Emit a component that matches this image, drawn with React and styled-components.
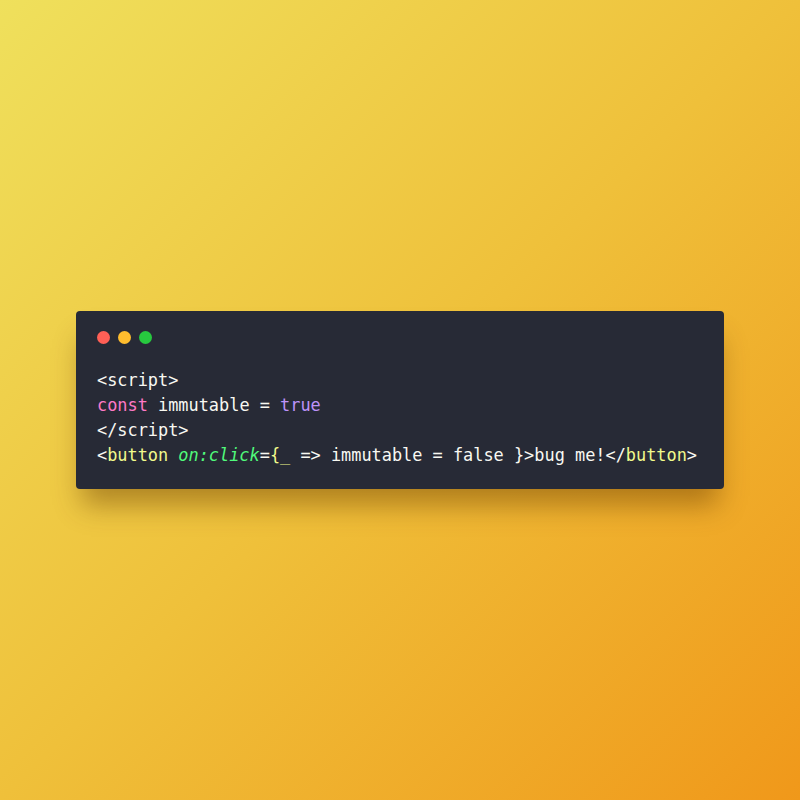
import styled, { createGlobalStyle } from "styled-components";

const Global = createGlobalStyle`
  html, body {
    margin: 0;
    padding: 0;
  }
`;

const Backdrop = styled.div`
  width: 800px;
  height: 800px;
  display: flex;
  align-items: center;
  justify-content: center;
  background: linear-gradient(135deg, #efe05c 0%, #efc03a 50%, #f0981a 100%);
`;

const Window = styled.div`
  box-sizing: border-box;
  width: 648px;
  padding: 20px 21px 21px 21px;
  background: #272a36;
  border-radius: 4px;
  box-shadow: 0 22px 26px -6px rgba(100, 55, 0, 0.45);
`;

const Controls = styled.div`
  display: flex;
  gap: 8px;
  margin-bottom: 24px;
`;

const Dot = styled.span`
  width: 13px;
  height: 13px;
  border-radius: 50%;
  background: ${(p) => p.color};
`;

const Code = styled.pre`
  margin: 0;
  font-family: "DejaVu Sans Mono", monospace;
  font-size: 16.9px;
  line-height: 25px;
  color: #f8f8f2;
`;

const Tok = styled.span`
  color: ${(p) => p.c};
  font-style: ${(p) => (p.italic ? "italic" : "normal")};
`;

export default function App() {
  return (
    <>
      <Global />
      <Backdrop>
        <Window>
          <Controls>
            <Dot color="#ff5f56" />
            <Dot color="#ffbd2e" />
            <Dot color="#27c93f" />
          </Controls>
          <Code>
            {"<script>\n"}
            <Tok c="#ff79c6">const</Tok>
            {" immutable = "}
            <Tok c="#bd93f9">true</Tok>
            {"\n</script>\n<"}
            <Tok c="#f1fa8c">button</Tok>{" "}
            <Tok c="#50fa7b" italic>on:click</Tok>
            {"="}
            <Tok c="#f1fa8c">{"{_"}</Tok>
            {" => immutable = false }>bug me!</"}
            <Tok c="#f1fa8c">button</Tok>
            {">"}
          </Code>
        </Window>
      </Backdrop>
    </>
  );
}
